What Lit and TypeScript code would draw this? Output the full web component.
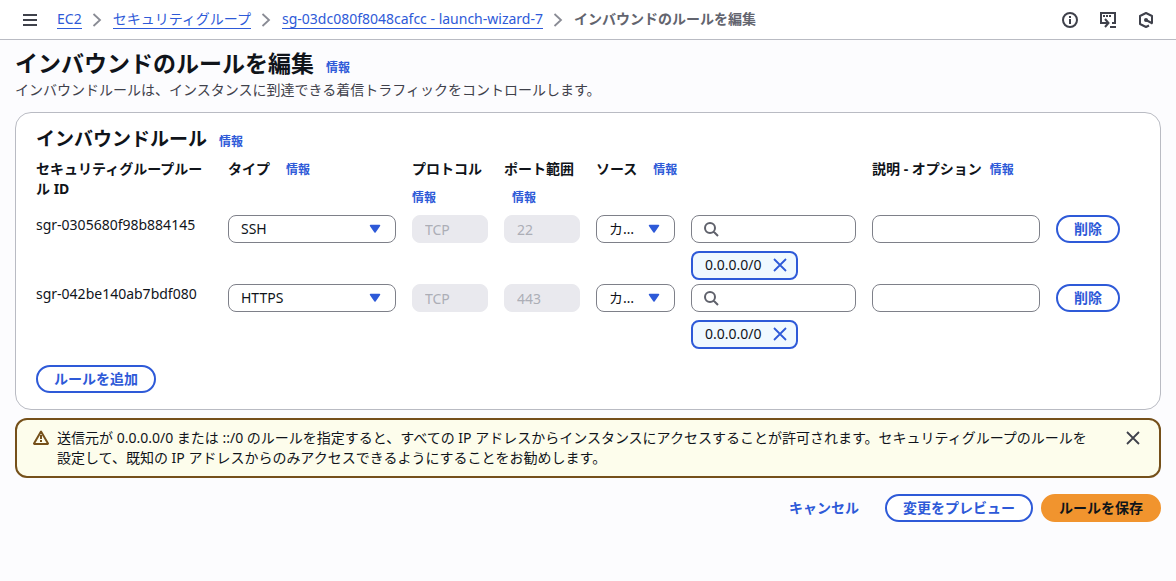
import { LitElement, html, css, svg } from "lit";
import { customElement, property, state } from "lit/decorators.js";

interface Rule {
  id: string;
  type: string;
  protocol: string;
  port: string;
  source: string;
  cidr: string;
}

const closeIcon = html`<svg class="icon" viewBox="0 0 16 16" aria-hidden="true">
  ${svg`<path d="M2 2 14 14M14 2 2 14" fill="none" stroke="currentColor" stroke-width="1.800"/>`}
</svg>`;

const chevron = html`<svg class="chevron" viewBox="0 0 16 16" aria-hidden="true">
  ${svg`<path d="M4.500 2 11 8l-6.500 6" fill="none" stroke="currentColor" stroke-width="1.800"/>`}
</svg>`;

const shared = css`
  :host {
    display: block;
    box-sizing: border-box;
  }
  *,
  *::before {
    box-sizing: border-box;
  }
  a {
    color: var(--link);
    text-decoration: none;
  }
  .icon {
    display: block;
    width: 16px;
    height: 16px;
    flex: none;
  }
  button,
  input,
  select {
    font: inherit;
    margin: 0;
  }
  .btn {
    height: 28px;
    padding: 0 16px;
    border: 2px solid var(--link);
    border-radius: 14px;
    background: #fff;
    color: var(--link);
    font-weight: 700;
    line-height: 20px;
    white-space: nowrap;
    cursor: pointer;
  }
  .btn.primary {
    border-color: #f1942e;
    background: #f1942e;
    color: #10141a;
  }
  .btn.plain {
    border-color: transparent;
    background: transparent;
  }
  .icon-btn {
    display: block;
    padding: 0;
    border: 0;
    background: none;
    color: inherit;
    cursor: pointer;
  }
  .info {
    font-size: 12px;
    font-weight: 700;
    line-height: 22px;
    white-space: nowrap;
  }
`;

@customElement("top-bar")
export class TopBar extends LitElement {
  static styles = [
    shared,
    css`
      :host {
        background: #fff;
        border-bottom: 1px solid #b9bbc3;
      }
      .bar {
        display: flex;
        align-items: center;
        justify-content: space-between;
        height: 39px;
        padding: 0 22px;
        color: #3f414b;
      }
      .left,
      .tools,
      ol {
        display: flex;
        align-items: center;
      }
      .left {
        gap: 19px;
      }
      .tools {
        gap: 22px;
      }
      ol {
        list-style: none;
        margin: 0;
        padding: 0;
        gap: 8px;
      }
      li {
        display: flex;
        align-items: center;
        gap: 7px;
        white-space: nowrap;
      }
      li a {
        line-height: 18px;
        border-bottom: 1px solid var(--link);
      }
      .current {
        color: #62646e;
        font-weight: 700;
        line-height: 18px;
        padding-bottom: 1px;
      }
      .chevron {
        width: 16px;
        height: 16px;
        color: #898b94;
      }
    `,
  ];

  render() {
    const crumbs = ["EC2", "セキュリティグループ", "sg-03dc080f8048cafcc - launch-wizard-7"];
    return html`<header class="bar">
      <div class="left">
        <button class="icon-btn" aria-label="メニュー">
          <svg class="icon" viewBox="0 0 16 16">
            <path d="M1 3h14M1 8h14M1 13h14" stroke="currentColor" stroke-width="2" />
          </svg>
        </button>
        <nav aria-label="パンくずリスト">
          <ol>
            ${crumbs.map((c) => html`<li><a href="#">${c}</a>${chevron}</li>`)}
            <li class="current" aria-current="page">インバウンドのルールを編集</li>
          </ol>
        </nav>
      </div>
      <div class="tools">
        <button class="icon-btn" aria-label="情報">
          <svg class="icon" viewBox="0 0 16 16" fill="none" stroke="currentColor" stroke-width="2">
            <circle cx="8" cy="8" r="7" />
            <path d="M8 7v5M8 4v2" />
          </svg>
        </button>
        <button class="icon-btn" aria-label="CloudShell">
          <svg class="icon" viewBox="0 0 16 16" fill="none" stroke="currentColor" stroke-width="2">
            <path d="M1 8V1h14v10h-3" />
            <path d="M3 4h2M6 4h2M9 4h2" />
            <path d="M1 7v4h7M5 7l3.500 4L5 15" />
            <path d="M10 15h6" />
          </svg>
        </button>
        <button class="icon-btn" aria-label="Amazon Q">
          <svg class="icon" viewBox="0 0 16 16" fill="none" stroke="currentColor" stroke-width="2">
            <path d="M11 13.500 8 15 2 12V4l6-3 6 3v7.500" stroke-linejoin="round" />
            <path d="M8 8l6.500 3.500" />
            <circle cx="8" cy="8" r="2" fill="currentColor" stroke="none" />
          </svg>
        </button>
      </div>
    </header>`;
  }
}

@customElement("rules-editor")
export class RulesEditor extends LitElement {
  @property({ attribute: false }) rules: Rule[] = [];

  static styles = [
    shared,
    css`
      :host {
        padding: 14px 20px 16px;
        border: 1px solid #b9bbc3;
        border-radius: 16px;
        background: #fff;
      }
      .title {
        display: flex;
        align-items: baseline;
        gap: 12px;
        line-height: 24px;
        margin-bottom: 6px;
      }
      h2 {
        margin: 0;
        font-size: 19px;
        line-height: 24px;
      }
      table {
        width: 100%;
        table-layout: fixed;
        border-collapse: collapse;
        margin-bottom: 12px;
      }
      .c-id { width: 192px; }
      .c-type { width: 184px; }
      .c-small { width: 92px; }
      .c-source { width: 95px; }
      .c-search { width: 181px; }
      .c-desc { width: 184px; }
      .c-action { width: 84px; }
      th,
      td {
        padding: 0 16px 0 0;
        text-align: left;
        vertical-align: top;
      }
      th {
        padding-bottom: 6px;
        font-weight: 700;
      }
      td:last-child {
        padding-right: 0;
      }
      .head {
        display: flex;
        gap: 0 16px;
        white-space: nowrap;
      }
      .head.tight {
        gap: 8px;
      }
      .head.stacked {
        flex-direction: column;
        gap: 8px;
      }
      .indent {
        padding-left: 8px;
      }
      .field {
        display: block;
        width: 100%;
        height: 28px;
        padding: 0 11px;
        border: 1px solid #7e8089;
        border-radius: 8px;
        background: #fff;
        color: #10141a;
        line-height: 20px;
      }
      .field:disabled {
        padding: 0 12px;
        border-color: #e9e9ee;
        background: #e9e9ee;
        color: #acaeb6;
      }
      .box {
        position: relative;
      }
      select.field {
        appearance: none;
        padding: 0 37px 0 12px;
        overflow: hidden;
        text-overflow: ellipsis;
        white-space: nowrap;
      }
      .arrow {
        position: absolute;
        top: 9px;
        right: 15px;
        width: 12px;
        height: 10px;
        pointer-events: none;
        color: var(--link);
      }
      .glass {
        position: absolute;
        top: 6px;
        left: 12px;
        color: #5f616b;
      }
      .search {
        padding-left: 36px;
      }
      .token {
        display: inline-flex;
        align-items: center;
        gap: 10px;
        height: 29px;
        margin: 8px 0 4px;
        padding: 0 8px 1px 12px;
        border: 2px solid var(--link);
        border-radius: 8px;
        background: #f0f9ff;
        vertical-align: top;
      }
      .token .icon-btn {
        color: var(--link);
      }
    `,
  ];

  private select(label: string, value: string) {
    return html`<div class="box">
      <select class="field" aria-label=${label}>
        <option>${value}</option>
      </select>
      <svg class="arrow" viewBox="0 0 12 10" aria-hidden="true">
        <path d="M1.500 1.500h9L6 8z" fill="currentColor" stroke="currentColor" stroke-width="1.500" stroke-linejoin="round" />
      </svg>
    </div>`;
  }

  private remove(rule: Rule) {
    this.dispatchEvent(new CustomEvent("remove-rule", { detail: rule.id }));
  }

  render() {
    const info = html`<a class="info" href="#">情報</a>`;
    return html`
      <div class="title"><h2>インバウンドルール</h2>${info}</div>
      <table>
        <colgroup>
          <col class="c-id" /><col class="c-type" /><col class="c-small" /><col class="c-small" />
          <col class="c-source" /><col class="c-search" /><col class="c-desc" /><col class="c-action" />
        </colgroup>
        <thead>
          <tr>
            <th scope="col">セキュリティグループルール ID</th>
            <th scope="col"><div class="head"><span>タイプ</span>${info}</div></th>
            <th scope="col"><div class="head stacked"><span>プロトコル</span>${info}</div></th>
            <th scope="col">
              <div class="head stacked"><span>ポート範囲</span><span class="indent info">${info}</span></div>
            </th>
            <th scope="colgroup" colspan="2"><div class="head"><span>ソース</span>${info}</div></th>
            <th scope="col"><div class="head tight"><span>説明 - オプション</span>${info}</div></th>
            <td></td>
          </tr>
        </thead>
        <tbody>
          ${this.rules.map(
            (r) => html`<tr>
              <td>${r.id}</td>
              <td>${this.select("タイプ", r.type)}</td>
              <td><input class="field" aria-label="プロトコル" disabled .value=${r.protocol} /></td>
              <td><input class="field" aria-label="ポート範囲" disabled .value=${r.port} /></td>
              <td>${this.select("ソース", r.source)}</td>
              <td>
                <div class="box">
                  <input class="field search" type="text" aria-label="ソースを検索" />
                  <svg class="icon glass" viewBox="0 0 16 16" aria-hidden="true">
                    <path
                      d="M10.500 10.500 15 15M12 7A5 5 0 1 1 2 7a5 5 0 0 1 10 0z"
                      fill="none"
                      stroke="currentColor"
                      stroke-width="2"
                    />
                  </svg>
                </div>
                <span class="token">
                  ${r.cidr}
                  <button class="icon-btn" aria-label="${r.cidr} を削除">${closeIcon}</button>
                </span>
              </td>
              <td><input class="field" type="text" aria-label="説明" /></td>
              <td><button class="btn" @click=${() => this.remove(r)}>削除</button></td>
            </tr>`
          )}
        </tbody>
      </table>
      <button class="btn" @click=${() => this.dispatchEvent(new CustomEvent("add-rule"))}>ルールを追加</button>
    `;
  }
}

@customElement("app-root")
export class AppRoot extends LitElement {
  @state() private rules: Rule[] = [
    { id: "sgr-0305680f98b884145", type: "SSH", protocol: "TCP", port: "22", source: "カスタム", cidr: "0.0.0.0/0" },
    { id: "sgr-042be140ab7bdf080", type: "HTTPS", protocol: "TCP", port: "443", source: "カスタム", cidr: "0.0.0.0/0" },
  ];
  @state() private warning = true;

  static styles = [
    shared,
    css`
      :host {
        --link: #2e5ad8;
        min-height: 100vh;
        background: #fcfcfe;
        color: #10141a;
        font: 14px/20px "Noto Sans", "Noto Sans CJK JP", sans-serif;
      }
      main {
        padding: 8px 15px 16px;
      }
      .title {
        display: flex;
        align-items: baseline;
        gap: 12px;
        line-height: 30px;
      }
      h1 {
        margin: 0;
        font-size: 23px;
        line-height: 30px;
      }
      .lead {
        margin: 1px 0 12px;
        color: #3f414b;
      }
      .alert {
        display: flex;
        align-items: flex-start;
        gap: 8px;
        margin-top: 8px;
        padding: 8px 18px 8px 16px;
        border: 2px solid #75501a;
        border-radius: 12px;
        background: #fdfdec;
      }
      .alert p {
        flex: 1;
        margin: 0 20px 0 0;
      }
      .alert .icon {
        margin: 2px 0;
      }
      .warn {
        color: #75501a;
      }
      .alert .icon-btn {
        color: #3f414b;
      }
      .actions {
        display: flex;
        justify-content: flex-end;
        gap: 8px;
        margin-top: 16px;
      }
    `,
  ];

  private add() {
    this.rules = [
      ...this.rules,
      { id: "-", type: "カスタム TCP", protocol: "TCP", port: "0", source: "カスタム", cidr: "0.0.0.0/0" },
    ];
  }

  render() {
    return html`
      <top-bar></top-bar>
      <main>
        <div class="title">
          <h1>インバウンドのルールを編集</h1>
          <a class="info" href="#">情報</a>
        </div>
        <p class="lead">インバウンドルールは、インスタンスに到達できる着信トラフィックをコントロールします。</p>
        <rules-editor
          .rules=${this.rules}
          @add-rule=${this.add}
          @remove-rule=${(e: CustomEvent<string>) => (this.rules = this.rules.filter((r) => r.id !== e.detail))}
        ></rules-editor>
        ${this.warning
          ? html`<div class="alert" role="alert">
              <svg class="icon warn" viewBox="0 0 16 16" fill="none" stroke="currentColor" stroke-width="2" aria-hidden="true">
                <path d="M8 1.500 1 13.500l.5.500h13l.5-.5z" stroke-linejoin="round" />
                <path d="M8 5v4M8 10v2" />
              </svg>
              <p>送信元が 0.0.0.0/0 または ::/0 のルールを指定すると、すべての IP アドレスからインスタンスにアクセスすることが許可されます。セキュリティグループのルールを設定して、既知の IP アドレスからのみアクセスできるようにすることをお勧めします。</p>
              <button class="icon-btn" aria-label="閉じる" @click=${() => (this.warning = false)}>${closeIcon}</button>
            </div>`
          : null}
        <div class="actions">
          <button class="btn plain">キャンセル</button>
          <button class="btn">変更をプレビュー</button>
          <button class="btn primary">ルールを保存</button>
        </div>
      </main>
    `;
  }
}
